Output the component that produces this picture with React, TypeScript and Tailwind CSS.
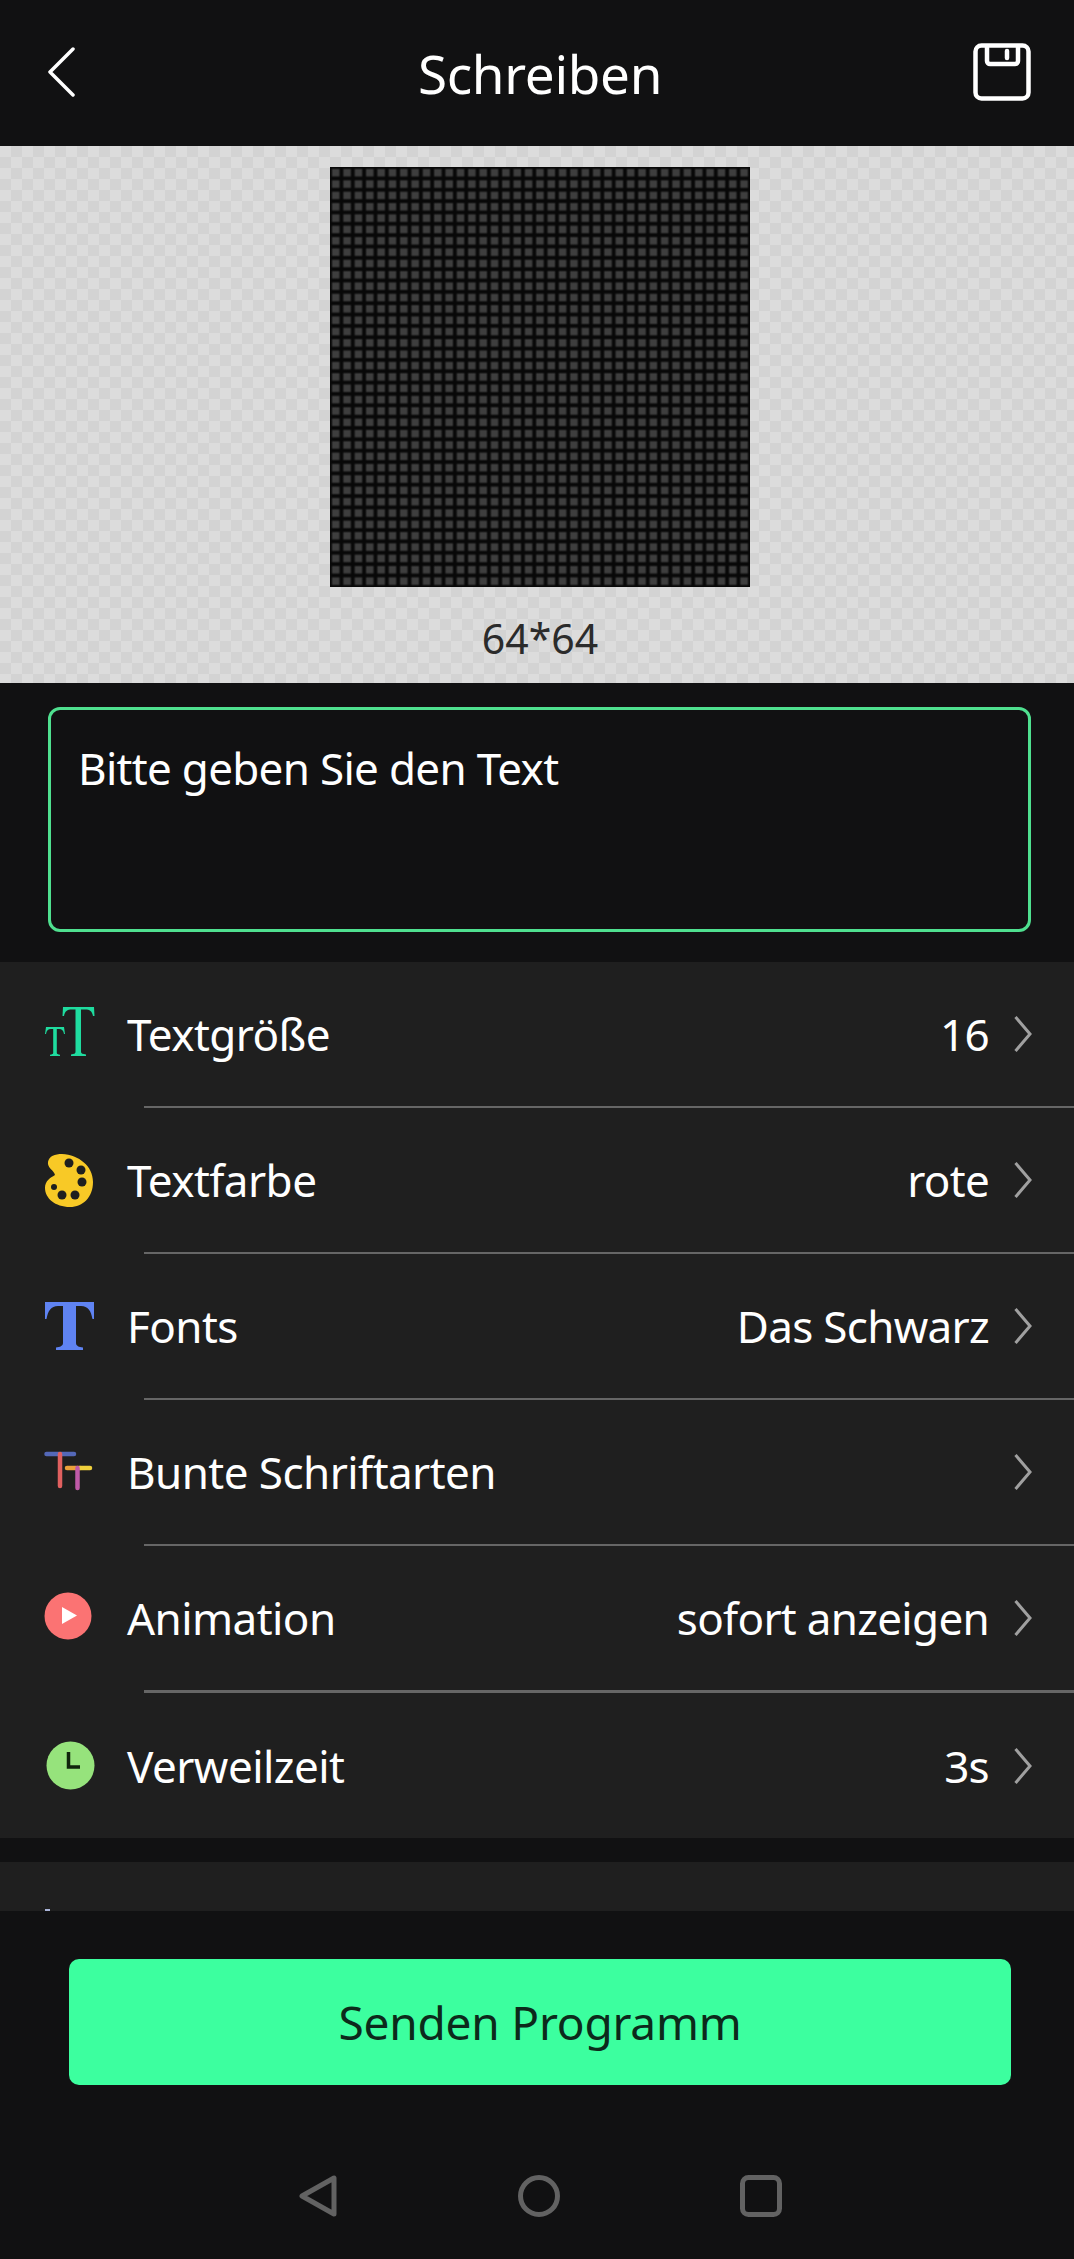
import React from 'react';

const font = "font-['Noto_Sans',sans-serif]";

const TextSizeIcon = () => (
  <svg width="52" height="52" viewBox="0 0 52 52" fill="#1fdc9f" className="-mt-[3px]">
    <path d="M19 0H50L50.500 9H49C48 4 46 2.500 41 2.500H37V45C37 46.500 39 47 42 47.500V49H27V47.500C30 47 31.500 46.500 31.500 45V2.500H28C23 2.500 21 4 20 9H18.500Z" />
    <path d="M2 20H20L21 27H20C19.500 23.500 18 22 15 22H12.800V46C12.800 47 14 47.300 16 47.700V49H6V47.700C8 47.300 9.200 47 9.200 46V22H7C4 22 2.500 23.500 2 27H1Z" />
  </svg>
);

const PaletteIcon = () => (
  <svg width="48" height="53" viewBox="0 0 48 53" className="ml-[1px]">
    <path
      d="M3 8C4 2 10 0 17 0C34 1 48 12 48 28C48 43 38 53 25 53C10 53 0 44 0 34C0 27 5 24 10 21C9 16 2 14 3 8Z"
      fill="#f8c926"
    />
    <g fill="#1f1f1f">
      <circle cx="24" cy="9" r="4.500" />
      <circle cx="36" cy="16" r="4.500" />
      <circle cx="37" cy="28" r="4.500" />
      <circle cx="30" cy="41" r="4.500" />
      <circle cx="17" cy="41" r="4.500" />
      <circle cx="9" cy="33" r="3" />
    </g>
  </svg>
);

const FontIcon = () => (
  <svg width="49" height="48" viewBox="0 0 49 48" fill="#5f83f2" className="ml-[1px]">
    <path d="M0 0H49V17H47.500C46 9 43 4 36 4H31V41C31 44 34 45 38 45.500V48H11V45.500C15 45 18 44 18 41V4H13C6 4 3 9 1.500 17H0Z" />
  </svg>
);

const ColorFontIcon = () => (
  <svg width="50" height="42" viewBox="0 0 50 42" fill="none" strokeWidth="4.500" strokeLinecap="round">
    <path d="M2.500 3H30" stroke="#5468b8" />
    <path d="M16 3V35" stroke="#e0605f" />
    <path d="M23 17H36" stroke="#eba13a" />
    <path d="M36 17H46" stroke="#efd03c" />
    <path d="M33.500 17V37" stroke="#c05aa8" />
  </svg>
);

const PlayIcon = () => (
  <svg width="48" height="48" viewBox="0 0 48 48" className="-mt-[4px]">
    <circle cx="24" cy="24" r="23.500" fill="#fb7373" />
    <path d="M18 15L33 23.500L18 32Z" fill="#fff" />
  </svg>
);

const ClockIcon = () => (
  <svg width="49" height="49" viewBox="0 0 49 49" className="ml-[2px]">
    <circle cx="24.500" cy="24.500" r="24" fill="#96e37c" />
    <path d="M22.500 11V26H34" fill="none" stroke="#10240c" strokeWidth="3.500" />
  </svg>
);

type Row = { icon: React.ReactNode; label: string; value?: string };

const rows: Row[] = [
  { icon: <TextSizeIcon />, label: 'Textgröße', value: '16' },
  { icon: <PaletteIcon />, label: 'Textfarbe', value: 'rote' },
  { icon: <FontIcon />, label: 'Fonts', value: 'Das Schwarz' },
  { icon: <ColorFontIcon />, label: 'Bunte Schriftarten' },
  { icon: <PlayIcon />, label: 'Animation', value: 'sofort anzeigen' },
  { icon: <ClockIcon />, label: 'Verweilzeit', value: '3s' },
];

const App: React.FC = () => {
  return (
    <div className={`${font} flex h-[2259px] w-[1074px] flex-col overflow-hidden bg-[#111112] text-white`}>
      {/* header */}
      <div className="flex h-[146px] shrink-0 items-center pl-[48px] pr-[42px] pb-[2px]">
        <div className="flex-1">
          <svg width="28" height="50" viewBox="0 0 28 50" fill="none" stroke="#fff" strokeWidth="3.500" strokeLinecap="round" strokeLinejoin="round">
            <path d="M25 2L2 25L25 48" />
          </svg>
        </div>
        <span className="mt-[3px] text-[53px] leading-none tracking-[-0.3px]">Schreiben</span>
        <div className="flex flex-1 justify-end">
          <svg width="58" height="58" viewBox="0 0 58 58" fill="none" stroke="#fff" strokeWidth="4.500" strokeLinejoin="round" className="-translate-x-[1px]">
            <rect x="2.500" y="2.500" width="53" height="53" rx="6" />
            <path d="M14 3V18A3 3 0 0 0 17 21H42A3 3 0 0 0 45 18V3" />
            <path d="M34 8V15" strokeLinecap="round" />
          </svg>
        </div>
      </div>

      {/* preview */}
      <div className="flex h-[537px] shrink-0 flex-col items-center bg-[#d8d8d8] bg-[conic-gradient(#d3d3d3_25%,#dcdcdc_0_50%,#d3d3d3_0_75%,#dcdcdc_0)] bg-[length:22px_22px] pl-[6px] pt-[21px]">
        <div className="h-[420px] w-[420px] bg-[#3e3e3e] bg-[linear-gradient(90deg,#080808_1px,transparent_3px,transparent_8.5px,#080808_10.5px),linear-gradient(#080808_1px,transparent_3px,transparent_8.5px,#080808_10.5px)] bg-[length:11.35px_11.35px]" />
        <span className="mt-[27px] text-[41px] leading-[48px] text-[#2b2b2b]">64*64</span>
      </div>

      {/* text input */}
      <div className="shrink-0 pl-[48px] pr-[43px] pt-[24px] pb-[30px]">
        <div className="h-[225px] rounded-[12px] border-[3px] border-[#4fe08f] pl-[27px] pr-[28px] pt-[28px] text-[44px] leading-[60px] tracking-[-0.7px]">
          Bitte geben Sie den Text
        </div>
      </div>

      {/* settings list */}
      <div className="shrink-0 bg-[#1f1f1f]">
        {rows.map((row, i) => (
          <div key={row.label}>
            <div className={`flex items-center pr-[42px] pl-[44px] ${i === rows.length - 1 ? 'h-[145px]' : 'h-[144px]'}`}>
              <div className="flex w-[83px] shrink-0 items-center">{row.icon}</div>
              <span className="text-[44px] leading-none tracking-[-0.55px]">{row.label}</span>
              <div className="ml-auto flex items-center gap-[25px] text-[44px] leading-none tracking-[-0.7px]">
                {row.value && <span>{row.value}</span>}
                <svg width="18" height="36" viewBox="0 0 18 36" fill="none" stroke="#a0a0a0" strokeWidth="3">
                  <path d="M1.500 1L16 18L1.500 35" />
                </svg>
              </div>
            </div>
            {i < rows.length - 1 && (
              <div className={`ml-[144px] bg-[#666] ${i === rows.length - 2 ? 'h-[3px]' : 'h-[2px]'}`} />
            )}
          </div>
        ))}
      </div>

      <div className="relative mt-[24px] h-[49px] shrink-0 bg-[#1f1f1f]">
        <div className="absolute bottom-0 left-[45px] h-[2px] w-[5px] bg-[#aab4d8]" />
      </div>

      {/* send button */}
      <div className="shrink-0 pl-[69px] pr-[63px] pt-[48px]">
        <button className="flex h-[126px] w-full items-center justify-center rounded-[10px] bg-[#3cff9f] text-[46px] tracking-[-0.2px] text-[#0c2a1b]">
          Senden Programm
        </button>
      </div>

      {/* android nav */}
      <div className="mt-[90px] flex items-center justify-center gap-[180px] pl-[6px] text-[#626262]">
        <svg width="40" height="42" viewBox="0 0 40 42" fill="none" stroke="currentColor" strokeWidth="5" strokeLinejoin="round">
          <path d="M36 3V39L4 21Z" />
        </svg>
        <svg width="42" height="42" viewBox="0 0 42 42" fill="none" stroke="currentColor" strokeWidth="5">
          <circle cx="21" cy="21" r="18.500" />
        </svg>
        <svg width="42" height="42" viewBox="0 0 42 42" fill="none" stroke="currentColor" strokeWidth="5">
          <rect x="2.500" y="2.500" width="37" height="37" rx="6" />
        </svg>
      </div>
    </div>
  );
};

export default App;
